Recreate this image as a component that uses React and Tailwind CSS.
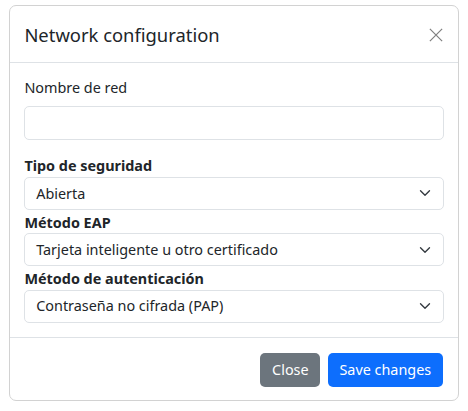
import React from "react";

const font = { fontFamily: '"Noto Sans", "Liberation Sans", sans-serif' };

function Chevron() {
  return (
    <svg width="12" height="12" viewBox="0 0 16 16" fill="none">
      <path d="m2 5 6 6 6-6" stroke="#343a40" strokeWidth="1.8" strokeLinecap="round" strokeLinejoin="round" />
    </svg>
  );
}

function Select({ value }) {
  return (
    <div className="flex h-[33px] items-center justify-between rounded-[5px] border border-[#dee2e6] bg-white pl-[10.8px] pr-[11.5px] text-[14.4px] leading-[21.6px] text-[#212529]">
      <span>{value}</span>
      <Chevron />
    </div>
  );
}

export default function App() {
  return (
    <div className="min-h-[411px] bg-white pl-[9px] pt-[5px]" style={font}>
      <div className="w-[450px] rounded-[7px] border border-[#d2d2d2] bg-white text-[#212529]">
        <div className="flex h-[57px] items-center justify-between border-b border-[#dee2e6] pl-[14.4px] pr-[15px]">
          <h5 className="text-[18.4px] font-normal leading-[27px]">Network configuration</h5>
          <svg width="14" height="14" viewBox="0 0 16 16" className="mt-[1px]">
            <path d="M1 1 15 15M15 1 1 15" stroke="#7f7f7f" strokeWidth="1.4" />
          </svg>
        </div>
        <div className="px-[14.4px] pb-[14.4px] pt-[14.4px]">
          <label className="mb-[7px] block text-[14.4px] leading-[21.6px]">Nombre de red</label>
          <div className="mb-[15px] h-[34.4px] rounded-[5px] border border-[#dee2e6] bg-white"></div>
          <label className="block text-[14.4px] font-bold leading-[21.6px]">Tipo de seguridad</label>
          <Select value="Abierta" />
          <label className="mt-[1.8px] block text-[14.4px] font-bold leading-[21.6px]">Método EAP</label>
          <Select value="Tarjeta inteligente u otro certificado" />
          <label className="mt-[1.8px] block text-[14.4px] font-bold leading-[21.6px]">Método de autenticación</label>
          <Select value="Contraseña no cifrada (PAP)" />
        </div>
        <div className="flex justify-end gap-[7.2px] border-t border-[#dee2e6] pb-[13px] pr-[15px] pt-[14.6px]">
          <button className="h-[34px] rounded-[5px] bg-[#6c757d] px-[11.8px] text-[14.4px] leading-[21.6px] text-white">Close</button>
          <button className="h-[34px] rounded-[5px] bg-[#0d6efd] px-[11.8px] text-[14.4px] leading-[21.6px] text-white">Save changes</button>
        </div>
      </div>
    </div>
  );
}
